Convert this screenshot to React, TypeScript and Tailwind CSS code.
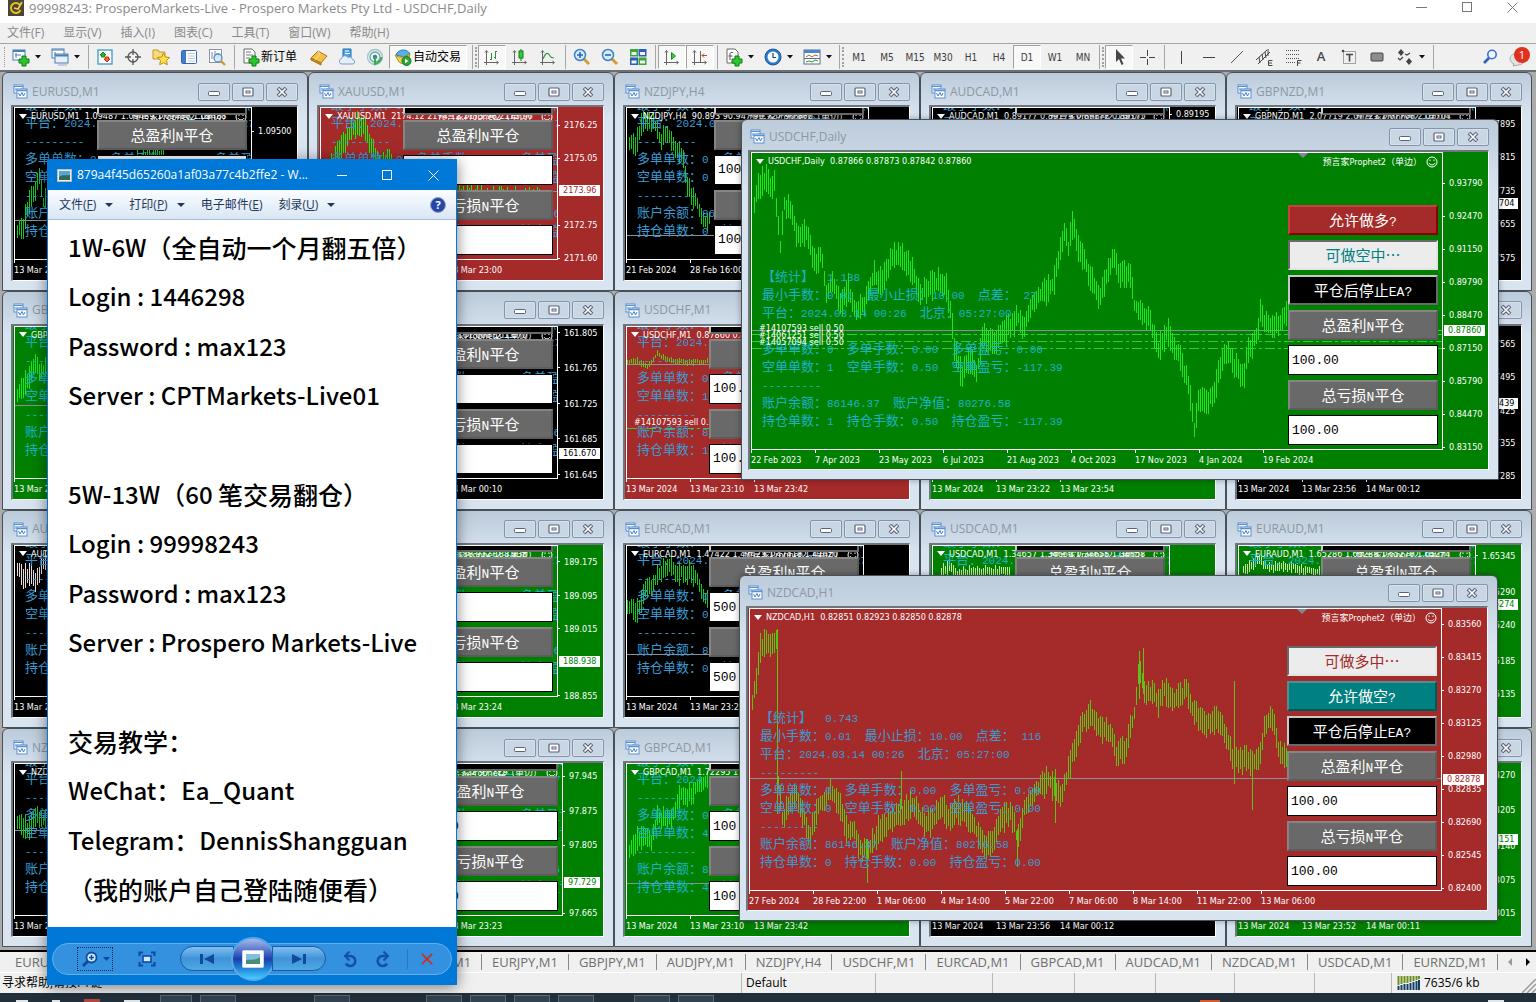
import React from "react";
import clsx from "clsx";
import { MdClose } from "react-icons/md";

type Point = [number, number];
type Tick = [number, string];

const UI = "font-['Open_Sans','Noto_Sans_CJK_SC',sans-serif]";
const MONO = "font-['Liberation_Mono',monospace]";
const LABEL = "font-['DejaVu_Sans_Condensed','Noto_Sans_CJK_SC',sans-serif] text-[9px] leading-[14px]";

interface ChartData {
  title: string;
  quote: string;
  bg: "black" | "red" | "green";
  points?: Point[];
  spikes?: [number, number, number][];
  amp?: number;
  line?: number;
  orders?: number[];
  orderLabels?: Tick[];
  ticks?: Tick[];
  current?: Tick;
  narrowAxis?: boolean;
  dates: string[];
  stats?: string[];
  amount?: string;
  barColor?: string;
  longOn?: boolean;
}

const makeStats = (long: string, short: string, last = "0") => [
  "【统计】  0.512",
  "最小手数：0.01  最小止损：10.00  点差： 21",
  "平台：2024.03.14 00:26  北京：05:27:00",
  "---------",
  `多单单数：${long}  多单手数：0.00  多单盈亏：0.00`,
  `空单单数：${short}  空单手数：0.00  空单盈亏：0.00`,
  "---------",
  "账户余额：86146.37  账户净值：80276.58",
  `持仓单数：${last}  持仓手数：0.00  持仓盈亏：0.00`,
];

const usdchfPoints: Point[] = [
  [1, 54], [6, 32], [14, 25], [19, 40], [22, 29], [25, 62], [28, 95], [32, 52], [39, 59], [44, 82],
  [51, 79], [57, 85], [62, 109], [69, 102], [74, 139], [81, 129], [89, 152], [96, 135], [104, 159], [112, 149],
  [122, 122], [129, 129], [136, 112], [142, 102], [152, 105], [162, 122], [167, 142], [176, 135], [186, 129], [194, 135],
  [199, 159], [202, 195], [209, 222], [219, 205], [224, 222], [231, 182], [242, 189], [256, 175], [266, 165], [272, 175],
  [279, 152], [289, 142], [301, 132], [306, 105], [312, 79], [316, 95], [320, 72], [326, 95], [336, 119], [347, 145],
  [356, 119], [361, 102], [367, 125], [377, 119], [382, 152], [386, 157], [396, 165], [406, 195], [416, 179], [426, 202],
  [434, 225], [439, 249], [442, 275], [447, 245], [454, 249], [462, 239], [469, 209], [476, 199], [486, 219], [491, 225],
  [496, 199], [506, 179], [507, 159], [512, 172], [526, 172], [532, 159], [537, 162],
];

const nzdcadPoints: Point[] = [
  [2, 91], [6, 71], [9, 41], [14, 34], [21, 39], [25, 28], [27, 34], [28, 174], [32, 211], [38, 198],
  [46, 184], [54, 211], [59, 228], [66, 201], [81, 181], [89, 194], [96, 221], [103, 218], [108, 238], [119, 241],
  [128, 221], [141, 211], [151, 204], [163, 194], [173, 214], [181, 214], [191, 198], [199, 208], [208, 201], [221, 211],
  [231, 234], [241, 234], [251, 211], [261, 204], [267, 231], [274, 201], [284, 184], [298, 171], [311, 188], [318, 161],
  [324, 141], [331, 118], [339, 104], [351, 121], [361, 124], [366, 148], [376, 138], [384, 104], [389, 58], [396, 88],
  [403, 81], [408, 94], [413, 81], [426, 91], [436, 81], [444, 104], [454, 114], [468, 111], [478, 134], [484, 151],
  [498, 151], [509, 154], [514, 121], [521, 104], [528, 138], [538, 151],
];

const every33 = (first: number, labels: string[]): Tick[] =>
  labels.map((l, i) => [first + i * 33, l]);

const charts: ChartData[] = [
  {
    title: "EURUSD,M1", quote: "1.09487 1.09489 1.09480 1.09488", bg: "black",
    points: [[1, 122], [8, 118], [13, 95], [20, 85], [24, 65], [28, 95], [33, 90], [60, 70], [140, 50], [150, 45]],
    line: 112, ticks: [[24, "1.09500"]], dates: ["13 Mar 2024", "13 Mar 23:56"], stats: makeStats("0", "0"), amount: "100.00",
  },
  {
    title: "XAUUSD,M1", quote: "2174.12 2174.12 2173.96 2173.96", bg: "red",
    points: [[10, 60], [15, 50], [25, 30], [35, 18], [45, 22], [52, 45], [60, 60], [68, 50], [75, 65], [85, 60], [120, 90], [220, 95]],
    amp: 12, line: 83, barColor: "#00ff00",
    ticks: [[18, "2176.25"], [51, "2175.05"], [118, "2172.75"], [151, "2171.60"]], current: [83, "2173.96"],
    dates: ["13 Mar 2024", "13 Mar 22:28", "13 Mar 23:00"], stats: makeStats("0", "0"), amount: "100.00",
  },
  {
    title: "NZDJPY,H4", quote: "90.893 90.947 90.727 90.806", bg: "black", narrowAxis: true,
    points: [[1, 33], [9, 36], [14, 16], [26, 13], [33, 33], [39, 26], [49, 40], [56, 50], [57, 60], [61, 80], [67, 90], [77, 113], [81, 116], [84, 93]],
    line: 127, dates: ["21 Feb 2024", "28 Feb 16:00", "7 Mar 04:00"], stats: makeStats("0", "0"), amount: "100.00",
  },
  {
    title: "AUDCAD,M1", quote: "0.89177 0.89179 0.89172 0.89175", bg: "black", ticks: [[7, "0.89195"]],
    dates: ["13 Mar 2024", "13 Mar 23:56", "14 Mar 00:12"], stats: makeStats("0", "0"), amount: "100.00",
  },
  {
    title: "GBPNZD,M1", quote: "2.07719 2.07721 2.07700 2.07704", bg: "black",
    ticks: [[17, "2.07895"], [50, "2.07815"], [84, "2.07735"], [117, "2.07655"], [151, "2.07575"]], current: [96, "2.07704"],
    dates: ["13 Mar 2024", "13 Mar 23:56", "14 Mar 00:12"], stats: makeStats("0", "0"), amount: "100.00",
  },
  {
    title: "GBPUSD,M1", quote: "1.27935 1.27940 1.27930 1.27938", bg: "green",
    points: [[2, 67], [8, 58], [14, 50], [20, 38], [26, 44], [33, 42]],
    line: 78, dates: ["13 Mar 2024", "13 Mar 23:56"], stats: makeStats("0", "0"), amount: "100.00",
  },
  {
    title: "EURJPY,M1", quote: "161.671 161.673 161.668 161.670", bg: "black",
    ticks: [[7, "161.805"], [42, "161.765"], [78, "161.725"], [113, "161.685"], [149, "161.645"]], current: [127, "161.670"],
    dates: ["13 Mar 2024", "13 Mar 23:54", "14 Mar 00:10"], stats: makeStats("0", "0"), amount: "100.00",
  },
  {
    title: "USDCHF,M1", quote: "0.87860 0.87861 0.87858 0.87860", bg: "red",
    points: [[0, 34], [10, 34], [20, 40], [30, 27], [40, 33], [60, 35], [84, 34]], amp: 3,
    line: 37, orders: [101], orderLabels: [[96, "#14107593 sell 0.50"]],
    dates: ["13 Mar 2024", "13 Mar 23:10", "13 Mar 23:42"], stats: makeStats("0", "1", "1"), amount: "100.00",
  },
  {
    title: "NZDCAD,M1", quote: "0.82878 0.82880 0.82875 0.82878", bg: "green",
    dates: ["13 Mar 2024", "13 Mar 23:22", "13 Mar 23:54"], stats: makeStats("0", "0"), amount: "100.00",
  },
  {
    title: "EURNZD,M1", quote: "1.77440 1.77445 1.77430 1.77439", bg: "black",
    ticks: [[18, "1.77565"], [51, "1.77495"], [85, "1.77425"], [117, "1.77355"], [150, "1.77285"]], current: [77, "1.77439"],
    dates: ["13 Mar 2024", "13 Mar 23:56", "14 Mar 00:12"], stats: makeStats("0", "0"), amount: "100.00",
  },
  {
    title: "AUDUSD,M1", quote: "0.66190 0.66193 0.66188 0.66190", bg: "black",
    points: [[1, 20], [8, 30], [15, 28], [20, 38], [26, 20], [33, 14]], barColor: "#e6dada",
    dates: ["13 Mar 2024", "13 Mar 23:56"], stats: makeStats("0", "0"), amount: "100.00",
  },
  {
    title: "GBPJPY,M1", quote: "188.936 188.939 188.932 188.938", bg: "green", line: 116,
    ticks: [[17, "189.175"], [51, "189.095"], [84, "189.015"], [151, "188.855"]], current: [116, "188.938"],
    dates: ["13 Mar 2024", "13 Mar 22:52", "13 Mar 23:24"], stats: makeStats("0", "0"), amount: "100.00",
  },
  {
    title: "EURCAD,M1", quote: "1.47422 1.47423 1.47418 1.47420", bg: "black",
    points: [[0, 58], [10, 65], [18, 45], [27, 36], [34, 26], [44, 20], [51, 28], [64, 25], [71, 36], [78, 53], [83, 58]],
    line: 108, dates: ["13 Mar 2024", "13 Mar 23:24", "13 Mar 23:56"], stats: makeStats("0", "0"), amount: "500.00",
  },
  {
    title: "USDCAD,M1", quote: "1.34657 1.34660 1.34655 1.34658", bg: "green",
    points: [[8, 26], [16, 20], [22, 28], [50, 26], [60, 26], [78, 24]], amp: 6, barColor: "#c9e6a0",
    dates: ["13 Mar 2024", "13 Mar 23:22", "13 Mar 23:54"], stats: makeStats("0", "0"), amount: "100.00",
  },
  {
    title: "EURAUD,M1", quote: "1.65286 1.65288 1.65270 1.65274", bg: "green",
    points: [[4, 24], [20, 14], [30, 22], [50, 20], [64, 24], [84, 26]], amp: 5, barColor: "#c9e6a0",
    ticks: [[11, "1.65345"], [47, "1.65290"], [80, "1.65240"], [116, "1.65185"], [149, "1.65135"]], current: [59, "1.65274"],
    dates: ["13 Mar 2024", "13 Mar 23:52", "14 Mar 00:11"], stats: makeStats("0", "0"), amount: "100.00",
  },
  {
    title: "NZDUSD,M1", quote: "0.61520 0.61523 0.61518 0.61521", bg: "black",
    points: [[1, 56], [7, 60], [13, 66], [22, 52], [33, 60]],
    line: 66, dates: ["13 Mar 2024", "13 Mar 23:56"], stats: makeStats("0", "0"), amount: "100.00",
  },
  {
    title: "AUDJPY,M1", quote: "97.725 97.729 97.722 97.729", bg: "green", narrowAxis: true,
    ticks: [[13, "97.945"], [48, "97.875"], [82, "97.805"], [150, "97.665"]], current: [119, "97.729"],
    dates: ["13 Mar 2024", "13 Mar 22:51", "13 Mar 23:23"], stats: makeStats("0", "0"), amount: "100.00",
  },
  {
    title: "GBPCAD,M1", quote: "1.72295 1.72298 1.72290 1.72295", bg: "green",
    points: [[2, 86], [11, 73], [24, 76], [30, 54], [44, 56], [51, 33], [64, 29], [74, 19], [84, 16]],
    line: 119, dates: ["13 Mar 2024", "13 Mar 23:10", "13 Mar 23:42"], stats: makeStats("0", "4", "4"), amount: "100.00",
  },
  {
    title: "AUDNZD,M1", quote: "1.07590 1.07592 1.07588 1.07590", bg: "black",
    dates: ["13 Mar 2024", "13 Mar 23:56", "14 Mar 00:12"], stats: makeStats("0", "0"), amount: "100.00",
  },
  {
    title: "GBPAUD,M1", quote: "1.93150 1.93152 1.93148 1.93151", bg: "green",
    ticks: [[12, "1.93270"], [47, "1.93205"], [83, "1.93140"], [117, "1.93075"], [150, "1.93015"]], current: [76, "1.93151"],
    dates: ["13 Mar 2024", "13 Mar 23:52", "14 Mar 00:11"], stats: makeStats("0", "0"), amount: "100.00",
  },
];

const usdchfDaily: ChartData = {
  title: "USDCHF,Daily", quote: "0.87866 0.87873 0.87842 0.87860", bg: "green",
  points: usdchfPoints, amp: 12, line: 177, orders: [181, 188, 195],
  orderLabels: [[176, "#14107593 sell 0.50"], [183, "#14061251 sell 0.50"], [190, "#14057094 sell 0.50"]],
  ticks: every33(31, ["0.93790", "0.92470", "0.91150", "0.89790", "0.88470", "0.87150", "0.85790", "0.84470", "0.83150"]),
  current: [178, "0.87860"],
  dates: ["22 Feb 2023", "7 Apr 2023", "23 May 2023", "6 Jul 2023", "21 Aug 2023", "4 Oct 2023", "17 Nov 2023", "4 Jan 2024", "19 Feb 2024"],
  stats: [
    "【统计】  1.138",
    "最小手数：0.01  最小止损：10.00  点差： 27",
    "平台：2024.03.14 00:26  北京：05:27:00",
    "",
    "多单单数：0  多单手数：0.00  多单盈亏：0.00",
    "空单单数：1  空单手数：0.50  空单盈亏：-117.39",
    "---------",
    "账户余额：86146.37  账户净值：80276.58",
    "持仓单数：1  持仓手数：0.50  持仓盈亏：-117.39",
  ],
  amount: "100.00",
};

const nzdcadH1: ChartData = {
  title: "NZDCAD,H1", quote: "0.82851 0.82923 0.82850 0.82878", bg: "red",
  points: nzdcadPoints, amp: 12, line: 169,
  spikes: [[151, 162, 200], [27, 20, 205], [484, 72, 175], [502, 150, 201], [117, 230, 274], [267, 220, 258], [389, 42, 90], [393, 39, 85], [305, 160, 214]],
  ticks: every33(16, ["0.83560", "0.83415", "0.83270", "0.83125", "0.82980", "0.82835", "0.82690", "0.82545", "0.82400"]),
  current: [171, "0.82878"],
  dates: ["27 Feb 2024", "28 Feb 22:00", "1 Mar 06:00", "4 Mar 14:00", "5 Mar 22:00", "7 Mar 06:00", "8 Mar 14:00", "11 Mar 22:00", "13 Mar 06:00"],
  stats: [
    "【统计】  0.743",
    "最小手数：0.01  最小止损：10.00  点差： 116",
    "平台：2024.03.14 00:26  北京：05:27:00",
    "---------",
    "多单单数：0  多单手数：0.00  多单盈亏：0.00",
    "空单单数：0  空单手数：0.00  空单盈亏：0.00",
    "---------",
    "账户余额：86146.37  账户净值：80276.58",
    "持仓单数：0  持仓手数：0.00  持仓盈亏：0.00",
  ],
  amount: "100.00",
  longOn: true,
};

const noise = (n: number) => {
  const v = Math.sin(n * 12.9898) * 43758.5453;
  return v - Math.floor(v);
};

// one high-low bar, one pixel wide, every two pixels along the polyline
function barPath(points: Point[], amp: number) {
  let d = "";
  for (let i = 0; i < points.length - 1; i++) {
    const [x0, y0] = points[i];
    const [x1, y1] = points[i + 1];
    for (let x = x0 + (x0 % 2); x < x1; x += 2) {
      const y = y0 + ((y1 - y0) * (x - x0)) / (x1 - x0);
      const top = Math.round(y - amp * (0.4 + 0.9 * noise(x)));
      const bottom = Math.round(y + amp * (0.4 + 0.9 * noise(x + 500)));
      d += `M${x} ${top}h1V${bottom}h-1z`;
    }
  }
  return d;
}

// Latin runs get their own face or size beside the full-width characters
function Mixed({ text, latin }: { text: string; latin: string }) {
  return (
    <>
      {text.split(/([ -~]+)/).map((part, i) =>
        i % 2 ? <span key={i} className={latin}>{part}</span> : part
      )}
    </>
  );
}

function ChartIcon() {
  return (
    <svg width="15" height="15" viewBox="0 0 15 15" fill="none" className="shrink-0">
      <rect x="1" y="1" width="9" height="8" fill="#f4f9ff" stroke="#5b8fd0" />
      <path d="M1 2.5h9" stroke="#5b8fd0" />
      <path d="M3 4v3M5.500 5v2M8 4v2" stroke="#5b8fd0" />
      <rect x="4" y="5" width="10" height="9" fill="#fff" stroke="#5b8fd0" />
      <path d="M4 6.500h10" stroke="#5b8fd0" strokeWidth="1.500" />
      <path d="M5.500 9l1.500 3 2-3.500 1.500 3.500 1.500-3" stroke="#4a80c8" />
    </svg>
  );
}

function WindowButtons() {
  const cell = "flex h-[18px] w-8 items-center justify-center rounded-[2px] border border-[#8494ad] bg-[#c9d6e4] shadow-[inset_0_0_0_1px_#d6e1ec]";
  return (
    <div className="flex gap-[2px]">
      <button className={cell} aria-label="Minimize">
        <svg width="12" height="10" viewBox="0 0 12 10"><rect x="0.500" y="4.500" width="11" height="4" rx="1" fill="#fff" stroke="#59637a" /></svg>
      </button>
      <button className={cell} aria-label="Restore">
        <svg width="12" height="10" viewBox="0 0 12 10"><rect x="1" y="1" width="10" height="8" rx="1" fill="#fff" stroke="#59637a" strokeWidth="1.200" /><rect x="4" y="4" width="4" height="2" fill="#fff" stroke="#59637a" /></svg>
      </button>
      <button className={cell} aria-label="Close">
        <svg width="12" height="10" viewBox="0 0 12 10"><path d="M2 1l8 8M10 1L2 9" stroke="#59637a" strokeWidth="3.800" /><path d="M2.500 1.500l7 7M9.500 1.500l-7 7" stroke="#fff" strokeWidth="1.600" /></svg>
      </button>
    </div>
  );
}

function PanelButton({ text, tone }: { text: string; tone: string }) {
  return (
    <button className={clsx("h-[30px] w-[150px] shrink-0 border-2 text-[15px] leading-[26px]", tone)}>
      <Mixed text={text} latin={clsx(MONO, "text-[13px]")} />
    </button>
  );
}

const grayTone = "border-[#858585] border-r-[#5c5c5c] border-b-[#5c5c5c] bg-[#696969] text-white";
const lightTone = "border-[#696969] border-r-[#e3e3e3] border-b-[#e3e3e3] bg-[#ececec]";

function ControlPanel({ data }: { data: ChartData }) {
  const field = clsx("h-[30px] w-[150px] shrink-0 border border-black bg-white px-[3px] text-[13px] text-black outline-none", MONO);
  return (
    <div className="absolute right-1 bottom-1 flex flex-col gap-[5px] font-['Noto_Sans_CJK_SC',sans-serif]">
      {data.longOn ? (
        <PanelButton text="可做多中…" tone={clsx(lightTone, "text-[#a52a2a]")} />
      ) : (
        <PanelButton text="允许做多?" tone="border-[#c84040] border-r-[#8b0000] border-b-[#8b0000] bg-[#a52a2a] text-white" />
      )}
      {data.longOn ? (
        <PanelButton text="允许做空?" tone="border-[#4f8f8f] border-r-[#005a5a] border-b-[#005a5a] bg-[#008080] text-white" />
      ) : (
        <PanelButton text="可做空中…" tone={clsx(lightTone, "text-[#008080]")} />
      )}
      <PanelButton text="平仓后停止EA?" tone="border-[#c8c8c8] border-r-[#696969] border-b-[#696969] bg-black text-white" />
      <PanelButton text="总盈利N平仓" tone={grayTone} />
      <input className={field} defaultValue={data.amount} aria-label="总盈利N平仓" />
      <PanelButton text="总亏损N平仓" tone={grayTone} />
      <input className={field} defaultValue={data.amount} aria-label="总亏损N平仓" />
    </div>
  );
}

function Chart({ data, floating }: { data: ChartData; floating?: boolean }) {
  const bar = data.barColor ?? (data.bg === "red" ? "#5cc414" : data.bg === "green" ? "#1ce61c" : "#14c814");
  return (
    <div
      className={clsx(
        "flex min-h-0 flex-1 flex-col border-t-2 border-r border-b border-l-2 border-t-[#6f757c] border-r-white border-b-white border-l-[#6f757c] pl-px text-white",
        data.bg === "black" && "bg-black",
        data.bg === "red" && "bg-[#a52a2a]",
        data.bg === "green" && "bg-[#008000]"
      )}
    >
      <div className="flex min-h-0 flex-1">
        <div className="relative flex-1 overflow-hidden border border-white">
          <svg className="absolute inset-0 h-full w-full" shapeRendering="crispEdges">
            {data.line !== undefined && <path d={`M0 ${data.line}h1200v1H0z`} fill="#8a9299" />}
            {data.orders?.map((y) => (
              <path key={y} d={`M0 ${y + 0.5}h1200`} stroke="#32cd32" strokeDasharray="10 3 3 3" />
            ))}
            {data.points && <path d={barPath(data.points, data.amp ?? 10)} fill={bar} />}
            {data.spikes?.map(([x, y1, y2]) => (
              <path key={x} d={`M${x} ${y1}h1V${y2}h-1z`} fill={bar} />
            ))}
          </svg>
          <div
            className={clsx(
              "absolute bottom-[20px] left-[10px] font-['Noto_Sans_CJK_SC',sans-serif] text-[13px] leading-[18px] whitespace-pre",
              data.bg === "green" ? "text-[#1fb0c8]" : "text-[#3a9bd2]"
            )}
          >
            {data.stats?.map((s, i) => (
              <p key={i} className="h-[18px]"><Mixed text={s} latin={clsx(MONO, "text-[11px]")} /></p>
            ))}
          </div>
          {data.orderLabels?.map(([y, text]) => (
            <p key={text} className={clsx("absolute left-[7px] whitespace-nowrap", LABEL)} style={{ top: y - 8 }}>{text}</p>
          ))}
          <svg width="10" height="5" className={clsx("absolute top-0", floating ? "right-[134px]" : "right-[43px]")}>
            <path d="M0 0h10l-5 5z" fill="#7d8b99" />
          </svg>
          <div className={clsx("absolute top-[1px] right-1 left-1 flex items-center", LABEL)}>
            <svg width="8" height="5" className="mr-[4px] shrink-0"><path d="M0 0h8L4 5z" fill="#fff" /></svg>
            <span className="whitespace-pre">{`${data.title}  ${data.quote}`}</span>
          </div>
          <div className={clsx("absolute top-[2px] right-1 flex items-center gap-1", LABEL)}>
            <span className="whitespace-nowrap">预言家Prophet2（单边）</span>
            <svg width="12" height="12" viewBox="0 0 12 12" fill="none" stroke="#fff">
              <circle cx="6" cy="6" r="5" />
              <path d="M3 7c1 2.500 5 2.500 6 0M4 3.500v1.500M8 3.500v1.500" />
            </svg>
          </div>
          <ControlPanel data={data} />
        </div>
        <div className={clsx("relative shrink-0", LABEL, data.narrowAxis ? "w-[40px]" : "w-[45px]")}>
          {data.ticks?.map(([y, text]) => (
            <div key={text} className="absolute left-0 flex items-center gap-[4px]" style={{ top: y - 7 }}>
              <span className="h-px w-[2px] bg-white" />
              {text}
            </div>
          ))}
          {data.current && (
            <div
              className={clsx(
                "absolute left-[1px] h-[11px] bg-white px-[4px] leading-[11px]",
                data.bg === "black" && "text-black",
                data.bg === "red" && "text-[#a52a2a]",
                data.bg === "green" && "text-[#008000]"
              )}
              style={{ top: data.current[0] - 5 }}
            >
              {data.current[1]}
            </div>
          )}
        </div>
      </div>
      <div className={clsx("flex shrink-0 overflow-hidden", LABEL, floating ? "h-[19px]" : "h-[20px]")}>
        {data.dates.map((d) => (
          <div key={d} className="w-16 shrink-0 whitespace-nowrap">
            <div className="h-[3px] border-l border-white" />
            {d}
          </div>
        ))}
      </div>
    </div>
  );
}

function ChartWindow({ data, floating, className }: { data: ChartData; floating?: boolean; className?: string }) {
  return (
    <section
      className={clsx(
        "flex min-h-0 min-w-0 flex-col rounded-t-md border border-[#4a5058] bg-linear-to-b from-[#bccbda] to-[#d9e4f1] to-20% pr-[9px] pb-[9px]",
        floating ? "pl-[6px] shadow-[0_0_6px_rgba(0,0,0,0.35)]" : "pl-2",
        className
      )}
    >
      <header className={clsx("flex shrink-0 items-center gap-1 pl-[2px]", floating ? "h-[30px] pt-[3px]" : "h-[32px] pt-[5px]")}>
        <ChartIcon />
        <h2 className="flex-1 truncate text-[12px] text-[#8d97a3]">{data.title}</h2>
        <WindowButtons />
      </header>
      <Chart data={data} floating={floating} />
    </section>
  );
}

/* ---------- toolbar ---------- */

function Icon({ children }: { children: React.ReactNode }) {
  return <svg width="20" height="20" viewBox="0 0 20 20" fill="none" className="shrink-0">{children}</svg>;
}

const Plus = () => <path d="M11 9h4v3h3v4h-3v3h-4v-3H8v-4h3z" fill="#2fc52f" stroke="#0c7d14" />;
const Axes = () => <path d="M4.500 4v14M2 15.500h14M3 5.500l1.500-2 1.500 2M14.500 14l2 1.500-2 1.500" stroke="#666" />;

const icons = {
  newChart: <><rect x="2" y="3" width="12" height="10" fill="#fff" stroke="#4a7fb5" /><path d="M2 4h12" stroke="#4a7fb5" strokeWidth="2" /><path d="M5 6v5M4 8h6" stroke="#4a7fb5" /><Plus /></>,
  profiles: <><rect x="2" y="2" width="12" height="9" fill="#fff" stroke="#4a7fb5" /><path d="M2 3h12M5 5v3h5" stroke="#4a7fb5" /><rect x="5" y="7" width="13" height="9" fill="#e8f1fb" stroke="#4a7fb5" /><path d="M5 8.500h13" stroke="#4a7fb5" strokeWidth="2" /><path d="M8 18h9" stroke="#8fb0d3" /></>,
  marketWatch: <><rect x="3" y="3" width="14" height="14" fill="#fff" stroke="#4a9fc8" strokeWidth="1.400" /><path d="M8 5l3 3H9.500v2h-3V8H5z" fill="#2fb52f" stroke="#17851c" /><path d="M12 15l-3-3h1.500v-2h3v2H15z" fill="#f26a4b" stroke="#c22a12" /></>,
  crosshair: <><circle cx="10" cy="10" r="5" stroke="#555" strokeWidth="1.300" /><path d="M10 2v6M10 12v6M2 10h6M12 10h6" stroke="#555" strokeWidth="1.300" /></>,
  folderStar: <><path d="M2 3h5l1 2h6v7H2z" fill="#f7dc7a" stroke="#c79a24" /><path d="M12.500 6l1.800 4 4.200.500-3 3 .800 4.200-3.800-2-3.800 2 .800-4.200-3-3 4.200-.500z" fill="#ffe14a" stroke="#c08a12" /></>,
  navigator: <><rect x="2.500" y="3.500" width="15" height="13" rx="1" fill="#fff" stroke="#2f66b5" /><path d="M3 4h4v12H3z" fill="#3f7ccf" /><path d="M9 6.500h7M9 9h7M9 11.500h7M9 14h7" stroke="#b9c8d8" /></>,
  tester: <><rect x="2.500" y="2.500" width="12" height="13" fill="#fff" stroke="#8a96a5" /><path d="M5 5v7M8 4v6M11 6v4" stroke="#6e8aa8" /><circle cx="11" cy="11" r="4" fill="#cfe6fb" fillOpacity="0.800" stroke="#5a8cc4" strokeWidth="1.300" /><path d="M14 14l4 4" stroke="#d29a2a" strokeWidth="2.400" /></>,
  newOrder: <><path d="M3 2h8l3 3v11H3z" fill="#fff" stroke="#666" /><path d="M5 5h5M5 8h7M5 11h4" stroke="#777" /><Plus /></>,
  gold: <><path d="M2 11l7-7 9 5-6 7z" fill="#f0c04a" stroke="#a87614" /><path d="M2 11l10 5v2L2 13z" fill="#c88f20" stroke="#a87614" /><path d="M9 4l2 3-5 6" stroke="#fae39a" /></>,
  cloud: <><path d="M6 2h8v9H6z" fill="#4ba3ea" stroke="#1e6fb8" /><path d="M8 4h4M8 6.500h5" stroke="#fff" /><path d="M4 17a3 3 0 01.500-5.500 3.500 3.500 0 016.500-1 3 3 0 014.500 2A2.300 2.300 0 0116 17z" fill="#e6eefa" stroke="#7e9cc4" /></>,
  signal: <><circle cx="10" cy="10" r="7.500" stroke="#9cc3d6" strokeWidth="1.300" /><circle cx="10" cy="10" r="5" stroke="#62b08c" strokeWidth="1.300" /><circle cx="10" cy="10" r="2.200" fill="#2c7fb8" /><path d="M10 10v7c3-1 6-3 6.500-7" stroke="#42a84e" strokeWidth="2" /></>,
  autotrade: <><path d="M3 8C5 2 14 1 17 7l-6 3z" fill="#57b0e6" stroke="#2b7ab0" /><path d="M2 8c4 3 9 3 15-1l-2 7c-4 3-7 3-9 1z" fill="#f5cf4e" stroke="#b58d1b" /><circle cx="13.500" cy="14" r="4.500" fill="#27a835" stroke="#137a1f" /><path d="M12 11.800v4.400l3.500-2.200z" fill="#fff" /></>,
  bars: <><Axes /><path d="M9.500 6v7M9.500 12.500H8M13.500 4v8M13.500 4.500h1.500M13.500 10.500H12" stroke="#2f8f3a" /></>,
  candles: <><Axes /><path d="M11 2v12" stroke="#0f7a1a" /><rect x="9" y="4" width="4" height="7" fill="#2fd03a" stroke="#0f7a1a" /></>,
  line: <><Axes /><path d="M5 12c3-7 5-7 7-3 1 2 2 2 4 2" stroke="#2f9a3a" strokeWidth="1.200" /></>,
  zoomIn: <><path d="M12 12l5 5" stroke="#d2a02c" strokeWidth="3" /><circle cx="8" cy="8" r="5.500" fill="#d6ecfc" stroke="#3f7fc4" strokeWidth="1.500" /><path d="M5 8h6M8 5v6" stroke="#2a66b0" strokeWidth="1.600" /></>,
  zoomOut: <><path d="M12 12l5 5" stroke="#d2a02c" strokeWidth="3" /><circle cx="8" cy="8" r="5.500" fill="#d6ecfc" stroke="#3f7fc4" strokeWidth="1.500" /><path d="M5 8h6" stroke="#2a66b0" strokeWidth="1.600" /></>,
  tile: <><rect x="2" y="2" width="8" height="7.500" fill="#3fa33f" /><rect x="10.500" y="2" width="8" height="7.500" fill="#2b5fb8" /><rect x="2" y="10.500" width="8" height="7.500" fill="#2b5fb8" /><rect x="10.500" y="10.500" width="8" height="7.500" fill="#3fa33f" /><path d="M3.500 5h5v3h-5zM12 5h5v3h-5zM3.500 13.500h5v3h-5zM12 13.500h5v3h-5z" fill="#eef5ea" /></>,
  autoScroll: <><Axes /><path d="M9.500 5.500v7l4-3.500z" fill="#3ccc48" stroke="#138a22" /></>,
  shift: <><Axes /><path d="M10.500 4v11" stroke="#666" /><path d="M17 8.500h-5M14 6.500l-2 2 2 2" stroke="#b5502a" /></>,
  indicators: <><path d="M3 2h8l3 3v11H3z" fill="#fff" stroke="#666" /><path d="M6 13V7c0-2 3-2 3-1M4.500 9h4" stroke="#555" /><Plus /></>,
  clock: <><circle cx="10" cy="10" r="8" fill="#2d78c8" stroke="#1b569c" /><circle cx="10" cy="10" r="5.500" fill="#f3f9ff" /><path d="M10 6v4.500h3" stroke="#345" strokeWidth="1.200" /></>,
  template: <><rect x="2" y="3" width="16" height="14" fill="#fff" stroke="#5b6f85" /><path d="M2 4.500h16" stroke="#4a86d0" strokeWidth="3" /><path d="M4 10l3-2 3 2 3-2 3 1" stroke="#a3672d" /><path d="M2 11.500h16" stroke="#5b6f85" /><path d="M4 15l3-1 3 1 3-2 3 1" stroke="#2b9a3b" /></>,
  cursor: <path d="M7 2v13l3-3 2.500 6 2-1-2.500-5.500h4z" fill="#484848" />,
  cross: <path d="M10.500 3v6M10.500 12v6M3 10.500h6M12 10.500h6" stroke="#444" />,
  vline: <path d="M10.500 4v13" stroke="#444" />,
  hline: <path d="M4 10.500h12" stroke="#444" />,
  trend: <path d="M4 16L16 4" stroke="#555" />,
  channel: <><path d="M1 13L12 3M3 17L15 5M4 10l1 6M7 7l1 6M10 5l1 6M13 2v7" stroke="#444" /><path d="M17.500 13.500h-4v5h4M14 16h3" stroke="#444" /></>,
  fibo: <><path d="M3 3.500h14M3 7.500h14M3 11.500h14M3 15.500h9" stroke="#555" strokeDasharray="1 1" /><path d="M14.500 19v-5.500h4M14.500 16h3" stroke="#444" /></>,
  label: <><rect x="4.500" y="4.500" width="12" height="12" stroke="#555" strokeDasharray="1 1" /><path d="M7 7.500h7M10.500 7.500v7" stroke="#444" strokeWidth="1.600" /><circle cx="4" cy="4" r="1.300" fill="#444" /></>,
  rect: <rect x="4" y="6" width="12" height="8" rx="1" fill="#8d8d8d" stroke="#444" />,
  arrows: <><path d="M6 2l3 3.500L6 9 3 5.500zM14 11l3 3.500-3 3.500-3-3.500z" fill="#444" /><path d="M3 11l2 2 3-3M10 7l2 1 3-2" stroke="#444" strokeWidth="1.200" /></>,
};

type IconName = keyof typeof icons;

function Tool({ name, pressed }: { name: IconName; pressed?: boolean }) {
  return (
    <button
      aria-label={name}
      className={clsx("flex h-6 w-7 shrink-0 items-center justify-center border", pressed ? "border-[#a0a0a0] border-r-white border-b-white bg-[#f8f8f8]" : "border-transparent")}
    >
      <Icon>{icons[name]}</Icon>
    </button>
  );
}

function DropTool({ name }: { name: IconName }) {
  return (
    <button aria-label={name} className="flex h-6 w-[39px] shrink-0 items-center gap-1 pl-1">
      <Icon>{icons[name]}</Icon>
      <svg width="6" height="4"><path d="M0 0h6L3 3.500z" fill="#111" /></svg>
    </button>
  );
}

function Sep({ grip }: { grip?: boolean }) {
  return (
    <div className={clsx("flex h-6 shrink-0 items-center justify-center gap-[2px]", grip ? "w-2" : "w-[6px]")}>
      <span className="h-6 w-px bg-[#a5a5a5]" />
      {grip && <span className="h-5 border-l-2 border-dotted border-[#a0a0a0]" />}
    </div>
  );
}

const frames = ["M1", "M5", "M15", "M30", "H1", "H4", "D1", "W1", "MN"];

function Toolbar() {
  return (
    <div className="flex h-[27px] shrink-0 items-center border-t border-[#a3a99a] bg-[#f0f0f0] pl-1">
      <span className="mr-[1px] h-5 w-[2px] shrink-0 border-l border-dotted border-[#999]" />
      <DropTool name="newChart" />
      <DropTool name="profiles" />
      <Sep />
      {(["marketWatch", "crosshair", "folderStar", "navigator", "tester"] as IconName[]).map((n) => <Tool key={n} name={n} />)}
      <Sep />
      <button className="flex h-6 w-[68px] shrink-0 items-center pl-1 text-[12px] whitespace-nowrap text-black">
        <Icon>{icons.newOrder}</Icon>新订单
      </button>
      <Tool name="gold" />
      <Tool name="cloud" />
      <Tool name="signal" />
      <button className="flex h-6 w-[78px] shrink-0 items-center border border-[#a0a0a0] border-r-white border-b-white bg-[#f8f8f8] pl-[3px] text-[12px] whitespace-nowrap text-black">
        <Icon>{icons.autotrade}</Icon>自动交易
      </button>
      <span className="w-[3px]" />
      <Sep grip />
      <Tool name="bars" pressed />
      <Tool name="candles" />
      <Tool name="line" />
      <Sep />
      <Tool name="zoomIn" />
      <Tool name="zoomOut" />
      <Tool name="tile" />
      <Sep />
      <Tool name="autoScroll" pressed />
      <Tool name="shift" pressed />
      <Sep />
      <DropTool name="indicators" />
      <DropTool name="clock" />
      <DropTool name="template" />
      <Sep grip />
      {frames.map((f) => (
        <button
          key={f}
          className={clsx(
            "h-6 w-7 shrink-0 border font-['DejaVu_Sans_Condensed',sans-serif] text-[10px] text-[#3c3c3c]",
            f === "D1" ? "border-[#a0a0a0] border-r-white border-b-white bg-[#f8f8f8]" : "border-transparent"
          )}
        >
          {f}
        </button>
      ))}
      <Sep grip />
      <Tool name="cursor" pressed />
      <Tool name="cross" />
      <Sep />
      <Tool name="vline" />
      <Tool name="hline" />
      <Tool name="trend" />
      <Tool name="channel" />
      <Tool name="fibo" />
      <button className="h-6 w-7 shrink-0 text-[13px] font-semibold text-[#4a4a4a]">A</button>
      <Tool name="label" />
      <Tool name="rect" />
      <DropTool name="arrows" />
      <Sep />
      <div className="ml-auto flex items-center gap-2 pr-[6px]">
        <button aria-label="Search" className="h-5 w-5">
          <svg width="20" height="20" viewBox="0 0 20 20" fill="none">
            <path d="M9 11l-5 5" stroke="#2f5fc4" strokeWidth="2.600" />
            <circle cx="12" cy="7.500" r="4.200" fill="#eef6ff" stroke="#3b6fd0" strokeWidth="1.600" />
          </svg>
        </button>
        <button aria-label="Notifications" className="relative h-5 w-[22px]">
          <svg width="20" height="20" viewBox="0 0 20 20"><path d="M2 12c0-4 4-6 8-6s7 3 7 6-3 6-7 6l-5 1 1-2c-2-1-4-3-4-5z" fill="#e3e3e3" stroke="#a8a8a8" /></svg>
          <span className="absolute top-0 right-0 h-4 w-4 rounded-full bg-[#e0301e] text-center text-[11px] leading-4 text-white">1</span>
        </button>
      </div>
    </div>
  );
}

/* ---------- photo viewer ---------- */

const viewerLines = [
  "1W-6W（全自动一个月翻五倍）",
  "Login : 1446298",
  "Password : max123",
  "Server : CPTMarkets-Live01",
  "",
  "5W-13W（60 笔交易翻仓）",
  "Login : 99998243",
  "Password : max123",
  "Server : Prospero Markets-Live",
  "",
  "交易教学：",
  "WeChat：Ea_Quant",
  "Telegram：DennisShangguan",
  "（我的账户自己登陆随便看）",
];

function MenuItem({ text, hot, caret }: { text: string; hot: string; caret?: boolean }) {
  return (
    <button className="flex items-center whitespace-nowrap">
      {text}(<u>{hot}</u>)
      {caret && <svg width="8" height="4" className="ml-[9px]"><path d="M0 0h8L4 4z" fill="#1e395b" /></svg>}
    </button>
  );
}

function PhotoViewer() {
  return (
    <section className="absolute top-[159px] left-[47px] flex h-[826px] w-[410px] flex-col border border-[#0078d7] bg-[#0078d7] shadow-[0_2px_14px_rgba(0,0,0,0.5)]">
      <header className="flex h-[30px] shrink-0 items-center pl-[9px] text-white">
        <svg width="15" height="13" viewBox="0 0 15 13">
          <rect x="0.500" y="0.500" width="14" height="12" fill="#eee" stroke="#bbb" />
          <rect x="2" y="2" width="11" height="9" fill="#5aa5d8" />
          <path d="M2 8c4-3 7-1 11-2v5H2z" fill="#2f6b58" />
        </svg>
        <h1 className="ml-[5px] flex-1 truncate text-[12px]">879a4f45d65260a1af03a77c4b2ffe2 - W...</h1>
        <button aria-label="Minimize" className="flex h-full w-[45px] items-center justify-center"><span className="h-px w-[10px] bg-white" /></button>
        <button aria-label="Maximize" className="flex h-full w-[46px] items-center justify-center"><span className="h-[10px] w-[10px] border border-white" /></button>
        <button aria-label="Close" className="flex h-full w-[46px] items-center justify-center">
          <svg width="11" height="11"><path d="M.500.500l10 10M10.500.500l-10 10" stroke="#fff" /></svg>
        </button>
      </header>
      <div className="flex h-[30px] shrink-0 items-center border-b border-[#a9bfd8] bg-linear-to-b from-[#fbfdff] to-[#d9e6f4] pr-[10px] pl-[11px] text-[12px] text-[#1e395b]">
        <div className="flex flex-1 items-center gap-4">
          <MenuItem text="文件" hot="F" caret />
          <MenuItem text="打印" hot="P" caret />
          <MenuItem text="电子邮件" hot="E" />
          <MenuItem text="刻录" hot="U" caret />
        </div>
        <button aria-label="Help" className="h-4 w-4 rounded-full border border-[#8fa3c8] bg-[#2846a8] text-center text-[11px] leading-[14px] font-bold text-white">?</button>
      </div>
      <div className="flex min-h-0 flex-1 flex-col bg-white pt-[2px] pb-[13px] pl-5 font-['Noto_Sans_CJK_SC',sans-serif] text-[25px] font-medium text-black">
        {viewerLines.map((l, i) => (
          <p key={i} className="flex flex-1 items-center leading-8 whitespace-pre">
            <Mixed text={l} latin="text-[24px]" />
          </p>
        ))}
      </div>
      <footer className="flex h-[57px] shrink-0 items-center px-1 pb-[2px] pt-[8px]">
        <div className="flex h-8 flex-1 items-center rounded-full border border-[#5fb0ee] bg-[#3391df] pr-[14px] pl-6">
          <button aria-label="Zoom" className="flex h-6 w-9 items-center justify-center gap-1 border border-dotted border-[#0a2a5a]">
            <svg width="18" height="18" viewBox="0 0 18 18" fill="none">
              <path d="M7 11l-5 5" stroke="#0f4a9c" strokeWidth="3" />
              <circle cx="10.500" cy="7.500" r="5" fill="#cfe9ff" stroke="#0f4a9c" strokeWidth="1.800" />
              <path d="M8 7.500h5M10.500 5v5" stroke="#0f4a9c" strokeWidth="1.500" />
            </svg>
            <svg width="7" height="4"><path d="M0 0h7L3.500 4z" fill="#0f4a9c" /></svg>
          </button>
          <button aria-label="Actual size" className="ml-[25px]">
            <svg width="18" height="16" viewBox="0 0 18 16" fill="none" stroke="#0f4a9c" strokeWidth="2">
              <path d="M1.500 5V1.500H5M13 1.500h3.500V5M16.500 11v3.500H13M5 14.500H1.500V11" />
              <rect x="5" y="5" width="8" height="6" fill="#cfe9ff" strokeWidth="1.600" />
            </svg>
          </button>
          <div className="ml-6 flex items-center">
            <button aria-label="Previous" className="flex h-[25px] w-[54px] items-center justify-center rounded-l-full border border-[#1a5b9e] bg-linear-to-b from-[#7fc0f2] via-[#3f93d8] to-[#4fa8e6]">
              <svg width="16" height="12"><path d="M1 1h3v10H1zM15 1v10L5 6z" fill="#0f4a9c" /></svg>
            </button>
            <button aria-label="Slide show" className="-mx-[3px] flex h-[44px] w-[44px] items-center justify-center rounded-full border-2 border-[#5aa8e8] bg-linear-to-b from-[#a9b8ea] via-[#1a3fb0] to-[#43d0ff]">
              <svg width="22" height="18" viewBox="0 0 22 18">
                <rect x="0.500" y="0.500" width="21" height="17" rx="1" fill="#fdfdfd" stroke="#c8d4e8" />
                <rect x="4" y="4" width="14" height="10" fill="#7fbfe0" />
                <path d="M4 10c5-1 8 1 14-3v7H4z" fill="#4c8a7a" />
              </svg>
            </button>
            <button aria-label="Next" className="flex h-[25px] w-[54px] items-center justify-center rounded-r-full border border-[#1a5b9e] bg-linear-to-b from-[#7fc0f2] via-[#3f93d8] to-[#4fa8e6]">
              <svg width="16" height="12"><path d="M12 1h3v10h-3zM1 1v10l10-5z" fill="#0f4a9c" /></svg>
            </button>
          </div>
          <button aria-label="Rotate left" className="ml-4">
            <svg width="16" height="18" viewBox="0 0 16 18" fill="none" stroke="#1550a8" strokeWidth="2.600"><path d="M3 6h5.500a5 5 0 11-4.500 7.500" /><path d="M7.500 1.500L3 6l4.500 4.500" strokeWidth="2" /></svg>
          </button>
          <button aria-label="Rotate right" className="ml-[17px]">
            <svg width="16" height="18" viewBox="0 0 16 18" fill="none" stroke="#1550a8" strokeWidth="2.600"><path d="M13 6H7.500a5 5 0 104.500 7.500" /><path d="M8.500 1.500L13 6l-4.500 4.500" strokeWidth="2" /></svg>
          </button>
          <span className="ml-4 h-5 w-px bg-[#2577c0]" />
          <button aria-label="Delete" className="ml-auto text-[#d8281c]"><MdClose size={20} /></button>
        </div>
      </footer>
    </section>
  );
}

/* ---------- page ---------- */

const menus = ["文件(F)", "显示(V)", "插入(I)", "图表(C)", "工具(T)", "窗口(W)", "帮助(H)"];
const tabs = ["EURUSD,M1", "GBPUSD,M1", "AUDUSD,M1", "NZDUSD,M1", "XAUUSD,M1", "EURJPY,M1", "GBPJPY,M1", "AUDJPY,M1", "NZDJPY,H4", "USDCHF,M1", "EURCAD,M1", "GBPCAD,M1", "AUDCAD,M1", "NZDCAD,M1", "USDCAD,M1", "EURNZD,M1"];

function StatusBar() {
  const cell = "h-full shrink-0 border-l border-[#b8b8b8]";
  return (
    <footer className="flex h-[21px] shrink-0 items-center border-t border-white bg-[#f0f0f0] text-[12px] leading-5 text-black">
      <span className="flex-1 pl-[2px]">寻求帮助,请按F1键</span>
      <span className={clsx(cell, "w-[134px] pl-1")}>Default</span>
      <span className={clsx(cell, "w-[117px]")} />
      <span className={clsx(cell, "w-[82px]")} />
      <span className={clsx(cell, "w-[81px]")} />
      <span className={clsx(cell, "w-[79px]")} />
      <span className={clsx(cell, "w-[80px]")} />
      <span className={clsx(cell, "w-[77px]")} />
      <span className={clsx(cell, "flex w-[145px] items-center gap-1 pl-[5px]")}>
        <svg width="23" height="14" viewBox="0 0 23 14">
          <path d="M1.500 0v9M4.500 0v8M7.500 0v7M10.500 0v7M13.500 0v6M16.500 0v5M19.500 0v4M22 0v3" stroke="#6d8f1e" strokeWidth="2" />
          <path d="M1.500 10v4M4.500 9v5M7.500 8v6M10.500 8v6M13.500 7v7M16.500 6v8M19.500 5v9M22 4v10" stroke="#123f66" strokeWidth="2" />
        </svg>
        <span className="flex-1">7635/6 kb</span>
        <svg width="14" height="14" className="self-end"><path d="M0 14L14 0M5 14l9-9M10 14l4-4" stroke="#9a9a9a" strokeWidth="1.500" /></svg>
      </span>
    </footer>
  );
}

function TaskBar() {
  return (
    <div className="flex h-[9px] shrink-0 items-end gap-2 overflow-hidden bg-[#22303c] pl-4">
      <span className="h-[2px] w-3 bg-[#dfe6ec]" />
      <span className="ml-4 h-[2px] w-2 bg-[#dfe6ec]" />
      <span className="ml-4 h-[3px] w-4 bg-[#b5483c]" />
      <span className="ml-4 h-[2px] w-4 bg-[#dfe6ec]" />
      {["ml-3 w-8", "w-9", "ml-[70px] w-9", "ml-[68px] w-9", "w-9", "w-9", "w-9 bg-[#7f97a8]", "ml-8 w-9", "w-9"].map((c, i) => (
        <span key={i} className={clsx("h-[7px] shrink-0 border border-b-0 border-[#5c6b78] bg-[#33424f]", c)} />
      ))}
      <span className="ml-auto h-[2px] w-5 bg-[#e0562c]" />
      <span className="mr-8 ml-[260px] h-[2px] w-4 bg-[#dfe6ec]" />
    </div>
  );
}

function App() {
  return (
    <main className={clsx("relative flex h-screen flex-col overflow-hidden bg-[#f0f0f0]", UI)}>
      <header className="flex h-[23px] shrink-0 items-start bg-white pl-2">
        <svg width="16" height="16" viewBox="0 0 16 16" fill="none" className="shrink-0">
          <rect width="16" height="16" fill="#4a4636" />
          <path d="M12 5a5 5 0 10.500 5" stroke="#e3c02a" strokeWidth="2" />
          <path d="M6 8l4 1 4-7" stroke="#f0d44a" strokeWidth="1.600" />
        </svg>
        <h1 className="ml-[5px] flex-1 truncate text-[13px] leading-4 text-[#8a8a8a]">
          99998243: ProsperoMarkets-Live - Prospero Markets Pty Ltd - USDCHF,Daily
        </h1>
        <div className="flex gap-[35px] pt-[2px] pr-[18px]">
          <button aria-label="Minimize" className="flex h-[11px] w-[11px] items-center"><span className="h-px w-full bg-[#777]" /></button>
          <button aria-label="Maximize" className="h-[10px] w-[10px] border border-[#777]" />
          <button aria-label="Close" className="h-[11px] w-[11px]"><svg width="11" height="11"><path d="M.500.500l10 10M10.500.500l-10 10" stroke="#777" /></svg></button>
        </div>
      </header>
      <nav className="flex h-5 shrink-0 items-center gap-[19px] pl-[7px] text-[12px] text-[#8a8a8a]">
        {menus.map((m) => <button key={m} className="whitespace-nowrap">{m}</button>)}
      </nav>
      <Toolbar />
      <div className="relative flex min-h-0 flex-1 border-t-2 border-[#6a6f72] bg-[#ababab] pr-1 pl-[2px] pb-[3px]">
        <div className="grid min-w-0 flex-1 grid-cols-5 grid-rows-4">
          {charts.map((c) => <ChartWindow key={c.title} data={c} />)}
        </div>
        <ChartWindow data={usdchfDaily} floating className="absolute top-[47px] left-[741px] h-[361px] w-[758px]" />
        <ChartWindow data={nzdcadH1} floating className="absolute top-[503px] left-[739px] h-[346px] w-[759px]" />
      </div>
      <nav className="flex h-[22px] shrink-0 items-center border-t-2 border-black bg-[#f0f0f0] pl-[5px] text-[13px] text-[#6f6f6f]">
        {tabs.map((t) => (
          <a key={t} href="#" className="border-r border-[#8a8a8a] px-[10px] leading-4 whitespace-nowrap">{t}</a>
        ))}
        <svg width="30" height="9" className="ml-auto shrink-0"><path d="M6 0v8L2 4z" fill="#9a9a9a" /><path d="M20 0v8l4-4z" fill="#000" /></svg>
      </nav>
      <StatusBar />
      <TaskBar />
      <PhotoViewer />
    </main>
  );
}

export default App;
